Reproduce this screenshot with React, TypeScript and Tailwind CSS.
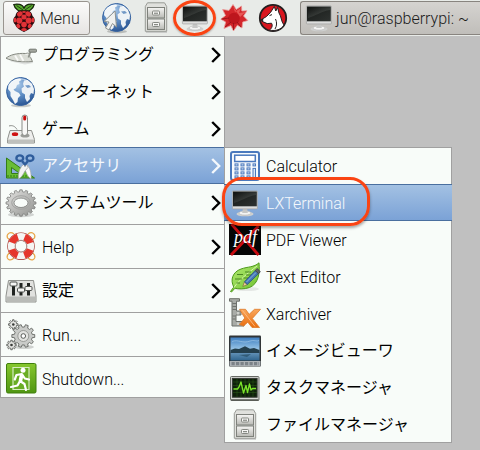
import React from 'react';

type IconProps = { children: React.ReactNode };

const Icon = ({ children }: IconProps) => (
  <svg viewBox="0 0 32 32" className="h-8 w-8 shrink-0" aria-hidden="true">
    {children}
  </svg>
);

// Outline of a cog wheel centred on cx, cy
const cogPath = (cx: number, cy: number, outer: number, inner: number, teeth: number, squash = 1) => {
  const points: string[] = [];
  for (let i = 0; i < teeth; i++) {
    [
      [-0.3, inner],
      [-0.2, outer],
      [0.2, outer],
      [0.3, inner],
    ].forEach(([offset, r]) => {
      const a = ((i + offset) / teeth) * Math.PI * 2;
      points.push(`${(cx + Math.cos(a) * r).toFixed(2)} ${(cy + Math.sin(a) * r * squash).toFixed(2)}`);
    });
  }
  return `M${points.join('L')}Z`;
};

const Gradients = () => (
  <svg className="absolute h-0 w-0" aria-hidden="true">
    <defs>
      <radialGradient id="ocean" cx="0.4" cy="0.25" r="0.8">
        <stop offset="0" stopColor="#a9c8e8" />
        <stop offset="0.5" stopColor="#5d8cc4" />
        <stop offset="1" stopColor="#24508f" />
      </radialGradient>
      <linearGradient id="metal" x1="0" y1="0" x2="0" y2="1">
        <stop offset="0" stopColor="#f6f6f4" />
        <stop offset="1" stopColor="#b9bab5" />
      </linearGradient>
      <linearGradient id="ring" x1="0" y1="0" x2="1" y2="1">
        <stop offset="0" stopColor="#e4e4e2" />
        <stop offset="1" stopColor="#8f908d" />
      </linearGradient>
      <linearGradient id="screen" x1="0" y1="0" x2="1" y2="1">
        <stop offset="0" stopColor="#171a18" />
        <stop offset="1" stopColor="#2e3230" />
      </linearGradient>
      <linearGradient id="glare" x1="0" y1="0" x2="1" y2="1">
        <stop offset="0" stopColor="#0d0f0e" />
        <stop offset="1" stopColor="#646a66" />
      </linearGradient>
      <linearGradient id="exit" x1="0" y1="0" x2="0" y2="1">
        <stop offset="0" stopColor="#86c72d" />
        <stop offset="1" stopColor="#4f9612" />
      </linearGradient>
      <linearGradient id="leaf" x1="0" y1="0" x2="1" y2="1">
        <stop offset="0" stopColor="#b6ec75" />
        <stop offset="1" stopColor="#6cc02c" />
      </linearGradient>
      <linearGradient id="orange" x1="0" y1="0" x2="0" y2="1">
        <stop offset="0" stopColor="#f9a85c" />
        <stop offset="1" stopColor="#e96c0c" />
      </linearGradient>
      <linearGradient id="sky" x1="0" y1="0" x2="0" y2="1">
        <stop offset="0" stopColor="#3f7fc0" />
        <stop offset="1" stopColor="#a9d2ee" />
      </linearGradient>
      <linearGradient id="lake" x1="0" y1="0" x2="0" y2="1">
        <stop offset="0" stopColor="#6d9cc2" />
        <stop offset="1" stopColor="#30648c" />
      </linearGradient>
    </defs>
  </svg>
);

const Globe = () => (
  <g>
    <ellipse cx="16" cy="29.5" rx="10" ry="1.8" fill="#000" opacity="0.2" />
    <circle cx="15.6" cy="15.5" r="14" fill="url(#ocean)" stroke="#34619f" />
    <path
      d="M3.5 9 6.5 5.5 11 3 15 2.5 16.5 4 14 5.5 14.5 8 12 9 11 12 8.5 13.5 10 15 14 17 15.5 19.5 13 22 12.5 26 10 28 8 24 5.5 20 5.5 16 3 13Z"
      fill="#f1f5f8"
    />
    <path
      d="M18 8 19 4.5 22.5 4 27 8 29 13 28.5 18 26 17 24.5 20 25 23 22 26 20 22 20 18.5 17 16.5 16.5 12.5 19 10.5Z"
      fill="#edf2f6"
    />
    <path d="M20 9.5 24 9 26 11 22.5 12Z" fill="#7299c6" />
    <path d="M4 9C9 1 22 1 27 9" fill="none" stroke="#fff" opacity="0.55" />
  </g>
);

const GlobeIcon = () => (
  <Icon>
    <Globe />
  </Icon>
);

const BrowserIcon = () => (
  <Icon>
    <Globe />
    <path d="M14 9 15.5 25 11.5 21.5 8 28 4.5 26 8 20 3 19.5Z" fill="#f0f1ef" stroke="#8d918e" />
  </Icon>
);

const CabinetIcon = () => (
  <Icon>
    <path d="M7.5 0.8H24.5L26.7 4.5V29.3H5.3V4.5Z" fill="#e0e1dd" stroke="#989a95" strokeLinejoin="round" />
    {[5.5, 17].map((y) => (
      <g key={y}>
        <rect x="7.5" y={y} width="17" height="10.5" fill="url(#metal)" stroke="#7f827c" />
        <rect x="12.5" y={y + 3.5} width="7" height="4" rx="0.8" fill="#f7f7f5" stroke="#858882" />
        <path d={`M14 ${y + 5.7}h4`} stroke="#6d706b" />
      </g>
    ))}
    <path d="M6 30.3H27" stroke="#888" opacity="0.4" />
  </Icon>
);

const MonitorIcon = () => (
  <Icon>
    <ellipse cx="16" cy="27" rx="8.5" ry="2.3" fill="#cfd0cf" />
    <ellipse cx="16" cy="26" rx="6" ry="2.1" fill="#f4f4f3" stroke="#b5b6b5" strokeWidth="0.6" />
    <path d="M14 21H18L18.8 26H13.2Z" fill="#c6c7c6" />
    <rect x="3.4" y="3.9" width="25" height="18" rx="0.7" fill="#dcdddc" stroke="#9d9f9d" strokeWidth="0.7" />
    <rect x="4" y="4.5" width="23.8" height="14.8" fill="url(#screen)" />
    <path d="M5 5.3H27V8C18 9 13 14 5 16Z" fill="url(#glare)" opacity="0.75" />
  </Icon>
);

const BurstIcon = () => (
  <Icon>
    <path
      d="M15 2.5 18.3 7.5 23.5 4 23.8 9 29 8.8 25.5 14 29.8 18.5 24.7 20 24 26 19.4 23.3 15.5 29 12.8 23.6 6 26.5 7.7 20 2.8 17.2 7.5 13.5 4.6 7.5 11 8.4Z"
      fill="#d3262b"
      stroke="#eb9a98"
      strokeWidth="0.8"
    />
    <path d="M15 4 17 10 23 6 21 11 27.5 10 22 15Z" fill="#ee6a66" opacity="0.75" />
    <circle cx="16" cy="16.5" r="5.8" fill="#bd161d" />
    <path d="M7 25 13 20M3.5 17 11 16M23 25 19 20M15.5 28 15.5 21" stroke="#8f0f16" strokeWidth="0.8" />
  </Icon>
);

const WolfIcon = () => (
  <Icon>
    <circle cx="16" cy="16" r="13.2" fill="#d9161f" stroke="#241f20" strokeWidth="1.8" />
    <path
      d="M17.3 4.5 18.8 9 20.6 5.5 22 11C24.5 14.5 24 19.5 27 23 24 27.6 19 29.2 12.5 28.2 15 26 16 23.5 14.5 21.2L10.2 21.6 5 19.3 4.5 17.5 9.5 14.5 13.7 10.2Z"
      fill="#fff"
      stroke="#241f20"
      strokeWidth="1"
      strokeLinejoin="round"
    />
    <path d="M12.5 13.6 15 12.6M18.5 17C20 20 20 24 18 27" fill="none" stroke="#241f20" />
    <circle cx="5.3" cy="17.9" r="1.1" fill="#241f20" />
  </Icon>
);

const RaspberryIcon = () => (
  <svg viewBox="0 0 24 30" className="h-[30px] w-6 shrink-0" aria-hidden="true">
    <path
      d="M12 8C8 9 3 7 1.8 1.5 5 .5 11 1 12 5.5 13 1 19 .5 22.2 1.5 21 7 16 9 12 8Z"
      fill="#58ab2d"
      stroke="#18250e"
      strokeWidth="1.2"
    />
    <path d="M4.5 2.5 11 7M19.5 2.5 13 7" stroke="#18250e" strokeWidth="0.8" />
    <path
      d="M12 7.5C16 6.5 20 8.5 20.5 13 23.5 15.5 23.3 19.5 20.8 21.5 19.5 25.5 16 27 12 29 8 27 4.5 25.5 3.2 21.5 .7 19.5 .5 15.5 3.5 13 4 8.5 8 6.5 12 7.5Z"
      fill="#2b0a0d"
    />
    <g fill="#e03237">
      <ellipse cx="7.8" cy="11" rx="2.9" ry="2.4" transform="rotate(-30 7.8 11)" />
      <ellipse cx="16.2" cy="11" rx="2.9" ry="2.4" transform="rotate(30 16.2 11)" />
      <ellipse cx="12" cy="9.1" rx="2" ry="1" />
      <circle cx="12" cy="14" r="2.6" />
      <circle cx="7.3" cy="17.6" r="3.1" />
      <circle cx="16.7" cy="17.6" r="3.1" />
      <ellipse cx="3" cy="17" rx="1.3" ry="2.6" />
      <ellipse cx="21" cy="17" rx="1.3" ry="2.6" />
      <circle cx="12" cy="21.6" r="2.8" />
      <ellipse cx="6.3" cy="23" rx="1.8" ry="2.4" transform="rotate(-30 6.3 23)" />
      <ellipse cx="17.7" cy="23" rx="1.8" ry="2.4" transform="rotate(30 17.7 23)" />
      <ellipse cx="12" cy="26.5" rx="2.8" ry="1.5" />
    </g>
  </svg>
);

const TrowelIcon = () => (
  <Icon>
    <path d="M6 21.5 20 24.5 28 23" fill="none" stroke="#777" strokeWidth="2" opacity="0.2" />
    <path d="M1 19.2C5 15.8 12 14 20.5 14.5L23.5 14 27.5 22.5C18 23.5 7 22.3 1 19.2Z" fill="#d9dcd5" stroke="#858981" />
    <path d="M10 16.5 13 21.5M15 15.8 18.5 22" stroke="#f8f9f7" strokeWidth="1.8" />
    <path d="M20.5 15.5 23.5 15 26 18.5" fill="none" stroke="#f2f3f0" />
    <path d="M23.5 18.5 25.5 12.5 27 11.5" fill="none" stroke="#8f938c" strokeWidth="1.8" />
    <rect x="24" y="10.2" width="7.5" height="3" rx="1" fill="#a3a79f" stroke="#72766f" />
  </Icon>
);

const JoystickIcon = () => (
  <Icon>
    <path d="M4 13C7 12 10 13 12 16.5" fill="none" stroke="#8a8c88" />
    <path d="M5 17.5H26.5L29.5 26.5V30H2.5V26.5Z" fill="#eeefed" stroke="#8e908c" strokeLinejoin="round" />
    <path d="M2.8 26.5H29.2V30H2.8Z" fill="#bfc1bd" />
    <ellipse cx="20" cy="22.5" rx="4.5" ry="2" fill="#9b9d99" />
    <rect x="17" y="2" width="5.5" height="20.5" rx="2.7" fill="#f8f8f7" stroke="#898b87" />
    <rect x="18.2" y="2.5" width="3" height="5" rx="1.5" fill="#c90d0d" />
    <ellipse cx="10" cy="21.2" rx="3.2" ry="1.9" fill="#cf1212" />
  </Icon>
);

const AccessoriesIcon = () => (
  <Icon>
    <path
      fillRule="evenodd"
      d="M1.5 8V28H29.5ZM6.5 17.5V23.5H15Z"
      fill="#69bd35"
      stroke="#347d16"
      strokeLinejoin="round"
    />
    <path d="M3 27V25M6 27V25M9 27V25M12 27V25M15 27V25M18 27V25M21 27V25" stroke="#2f7a12" />
    <path d="M17 17.5 19.5 12.5 23.5 16.5C25.5 20 26.5 24 26 29 23.5 27.5 22 24.5 20.5 21Z" fill="#fafafa" stroke="#a9adb0" strokeWidth="0.7" />
    <path d="M23 17.5 20.5 12.5 16.5 16.5C14 20 13 24 13.5 29 16.5 27.5 18 24.5 20 21Z" fill="#f2f3f3" stroke="#a1a5a8" strokeWidth="0.7" />
    <path d="M17 11 20 14.5 23 11" fill="none" stroke="#2f5d9c" strokeWidth="2.5" />
    <ellipse cx="14.8" cy="8.2" rx="3.4" ry="2.8" fill="none" stroke="#2f5d9c" strokeWidth="2.4" />
    <ellipse cx="25" cy="8.2" rx="3.4" ry="2.8" fill="none" stroke="#2f5d9c" strokeWidth="2.4" />
    <circle cx="20" cy="16" r="0.8" fill="#8d9195" />
  </Icon>
);

const SystemIcon = () => (
  <Icon>
    <ellipse cx="16" cy="27.8" rx="13" ry="2.4" fill="#777" opacity="0.3" />
    <path
      fillRule="evenodd"
      d={`${cogPath(16, 16, 15, 12.8, 16, 0.88)}M9 15.8a7 4.7 0 1 0 14 0a7 4.7 0 1 0-14 0Z`}
      fill="url(#ring)"
      stroke="#7d7f7c"
      strokeWidth="0.8"
    />
    <ellipse cx="16" cy="15.5" rx="9.3" ry="6.8" fill="none" stroke="#a2a3a1" />
  </Icon>
);

const HelpIcon = () => (
  <Icon>
    <g fill="none" stroke="#e8a64a" strokeWidth="1.2">
      <path d="M9 3C5 0 1 3 2.5 7L5 9M23 3C27 0 31 3 29.5 7L27 9M9 27C5 31 1 28 2.5 24L5 21M23 27C27 31 31 28 29.5 24L27 21" />
    </g>
    <circle cx="16" cy="15.2" r="9.6" fill="none" stroke="#9f2a22" strokeWidth="8.2" />
    <circle cx="16" cy="15.2" r="9.6" fill="none" stroke="#f5f5f3" strokeWidth="7" />
    <circle
      cx="16"
      cy="15.2"
      r="9.6"
      fill="none"
      stroke="#e5362c"
      strokeWidth="7"
      strokeDasharray="8.3 6.78"
      transform="rotate(20 16 15.2)"
    />
    <circle cx="16" cy="15.2" r="6" fill="none" stroke="#aaa8a6" strokeWidth="0.8" />
  </Icon>
);

const MixerIcon = () => (
  <Icon>
    <path d="M3.5 5.5H28.5L31 21V27H1V21Z" fill="#e1e2df" stroke="#8f918d" strokeLinejoin="round" />
    <path d="M1.5 21.5H30.5V26.5H1.5Z" fill="#b9bbb7" />
    <path d="M8.5 8V20.5M16 8V20.5M23.5 8V20.5" stroke="#202320" strokeWidth="3" />
    {[
      [5, 7],
      [12.5, 13],
      [20, 11.5],
    ].map(([x, y]) => (
      <rect key={x} x={x} y={y} width="7" height="4" rx="1" fill="#f5f5f3" stroke="#4d504c" />
    ))}
  </Icon>
);

const RunIcon = () => (
  <Icon>
    <ellipse cx="19" cy="28" rx="10" ry="2" fill="#555" opacity="0.25" />
    <path d={cogPath(18.3, 17, 11.5, 9, 10)} fill="#c9cbc8" stroke="#70736f" />
    <circle cx="18.3" cy="17" r="5.5" fill="#e2e3e0" stroke="#999b97" />
    <circle cx="18.3" cy="17" r="2.3" fill="#fff" stroke="#5b5e5a" />
    {[
      [8.3, 5.5],
      [6.5, 26],
    ].map(([x, y]) => (
      <g key={y}>
        <path d={cogPath(x, y, 4.8, 3.4, 8)} fill="#e3e4e1" stroke="#676a66" />
        <circle cx={x} cy={y} r="1.3" fill="#383b37" />
      </g>
    ))}
  </Icon>
);

const ShutdownIcon = () => (
  <Icon>
    <rect x="1.5" y="0.5" width="29.5" height="29.5" rx="1.5" fill="url(#exit)" stroke="#3f7f0c" />
    <path d="M8 4.5H24V26.5H8Z" fill="#69ad23" stroke="#d5ecc0" strokeWidth="1.2" />
    <circle cx="18" cy="7.2" r="2.5" fill="#fff" />
    <path
      d="M16.8 11 11.5 12 9.8 16.5M16.8 11 15 18 19.5 21 21 27M15 18 12.5 22.5 6 24M17.5 12 19.8 15.5 24 16.5"
      fill="none"
      stroke="#fff"
      strokeWidth="2.2"
      strokeLinecap="round"
      strokeLinejoin="round"
    />
    <path d="M16.6 12.5 15.5 17.5" stroke="#fff" strokeWidth="3.6" strokeLinecap="round" />
  </Icon>
);

const CalculatorIcon = () => (
  <Icon>
    <rect x="2" y="2" width="28" height="28" rx="2" fill="#f7fafc" stroke="#4a79bd" strokeWidth="2" />
    <rect x="5.7" y="5.2" width="20.6" height="6.3" fill="#fff" stroke="#4a79bd" strokeWidth="1.5" />
    {[14.5, 18.5, 22.5, 26.5].map((y) =>
      [6, 12, 18].map((x) => (
        <rect key={`${x}-${y}`} x={x} y={y - 0.6} width="3" height="2" fill="#dce7f4" stroke="#4a79bd" />
      ))
    )}
    <rect x="24" y="13.9" width="2.5" height="2" fill="#dce7f4" stroke="#4a79bd" />
    <rect x="24" y="18.4" width="2.5" height="9.6" fill="#dce7f4" stroke="#4a79bd" />
  </Icon>
);

const PdfIcon = () => (
  <Icon>
    <rect width="32" height="31" fill="#050505" />
    <path d="M2.5 0 29.5 31M29.5 2 2 31" stroke="#c80c10" strokeWidth="2.8" />
    <text
      x="5"
      y="19"
      fill="#fff"
      fontFamily="'Liberation Serif', serif"
      fontStyle="italic"
      fontSize="18"
    >
      pdf
    </text>
  </Icon>
);

const LeafIcon = () => (
  <Icon>
    <ellipse cx="18" cy="28" rx="12" ry="2" fill="#777" opacity="0.15" />
    <path
      d="M1.5 30.5 4.8 26C1 19 3.5 11 12 8 19 5.5 25 6.5 30 1.8 31 12 29.5 23 20.5 26.5 15 28.5 9 28 6 27.2L2.5 31Z"
      fill="url(#leaf)"
      stroke="#4d9a1b"
      strokeLinejoin="round"
    />
    <path d="M5 26.5C10 19 19 12 28 5" fill="none" stroke="#d7f6ad" />
    <path d="M8 13.5H14M16 11H22M6 18H13M14.5 17H19M17 14H24M7.5 22H11" stroke="#4b8624" />
    <path d="M13.8 25.5 15.5 20.8 18.2 23.6Z" fill="#f2d19b" stroke="#775e32" strokeWidth="0.6" />
    <path d="M15.5 20.8 26.2 9.5 29.5 12.7 18.2 23.6Z" fill="#4679b4" stroke="#294f7d" strokeWidth="0.8" />
    <path d="M26.2 9.5 28.2 7.5 31.3 10.8 29.5 12.7Z" fill="#60656a" stroke="#393d41" strokeWidth="0.8" />
    <path d="M17.5 21 27 11.5" stroke="#8bb3df" />
  </Icon>
);

const ArchiverIcon = () => (
  <Icon>
    <path
      d="M0.5 0.7H10.5V3.2H7.5V13H12V17H7V23.5H15V28H3V3.2H0.5Z"
      fill="#a9aca7"
      stroke="#6d706b"
      strokeLinejoin="round"
    />
    <path d="M3.5 5.5H7M3.5 8.5H7M3.5 11.5H7M3.5 18H6.5M3.5 21H6.5" stroke="#70736e" />
    <path d="M9 14V16.5M9 24.5V27" stroke="#d9dbd7" strokeWidth="1.5" />
    <path
      d="M10.5 11.3H16.5L20.2 16.3 25.5 11.3H31.5L23.3 20.5 30.5 29.5H23L18.8 24.2 14.5 28 10.5 26.5 15.8 20Z"
      fill="url(#orange)"
      stroke="#dd7a29"
      strokeWidth="0.8"
    />
    <path d="M13.5 12.5 26 28.5" stroke="#fcc38e" strokeWidth="0.8" />
  </Icon>
);

const ImageIcon = () => (
  <Icon>
    <rect y="0.5" width="32" height="31" rx="1" fill="#303537" />
    <rect x="1.5" y="2.5" width="29" height="14" fill="url(#sky)" />
    <path d="M3 6.5C9 4 14 9 21 6 25 4.5 28 7 30 5.5" fill="none" stroke="#b9d8ef" opacity="0.5" />
    <rect x="1.5" y="16" width="29" height="9.5" fill="url(#lake)" />
    <path d="M1.5 15 6 13.5 10 14 16 11.3 21 13.8 25 13 30.5 15V18H1.5Z" fill="#243f4d" />
    <path d="M10 20 22 19 18 22Z" fill="#1e4358" opacity="0.6" />
    <rect x="0.5" y="26" width="31" height="5.2" fill="#aeb3b6" />
    <path d="M2.5 28.6H30" stroke="#7b8287" strokeWidth="3.2" strokeDasharray="3.2 1.3" />
  </Icon>
);

const TaskIcon = () => (
  <Icon>
    <rect x="1.5" y="4.5" width="28.5" height="24" rx="1" fill="#d9dbd6" stroke="#686b66" />
    <rect x="3.4" y="6.4" width="24.7" height="18.8" fill="#0d2009" stroke="#343832" />
    <path
      d="M4 10H28M4 13.5H28M4 17H28M4 20.5H28M8 7V25M12 7V25M16 7V25M20 7V25M24 7V25"
      stroke="#2c5c18"
      strokeWidth="0.5"
    />
    <path
      d="M4.5 17H8.5L10 15 12 10 14.5 21 17 13.5 18.5 20.5 20.5 12 22 18 23.5 16.5H27"
      fill="none"
      stroke="#7be52a"
      strokeWidth="1.3"
      strokeLinejoin="round"
    />
    <path d="M2 28H29.5" stroke="#555852" strokeWidth="1.5" />
  </Icon>
);

const Arrow = () => (
  <svg viewBox="0 0 10 16" className="ml-auto h-4 w-2.5 shrink-0" aria-hidden="true">
    <path d="M1.2 1 8.2 8 1.2 15" fill="none" stroke="currentColor" strokeWidth="2.4" />
  </svg>
);

type Entry = {
  label: string;
  icon: React.FC;
  hasSubmenu?: boolean;
  active?: boolean;
  submenu?: Entry[];
};

const accessories: Entry[] = [
  { label: 'Calculator', icon: CalculatorIcon },
  { label: 'LXTerminal', icon: MonitorIcon, active: true },
  { label: 'PDF Viewer', icon: PdfIcon },
  { label: 'Text Editor', icon: LeafIcon },
  { label: 'Xarchiver', icon: ArchiverIcon },
  { label: 'イメージビューワ', icon: ImageIcon },
  { label: 'タスクマネージャ', icon: TaskIcon },
  { label: 'ファイルマネージャ', icon: CabinetIcon },
];

// Each inner list is separated from the next one by a line
const menuGroups: Entry[][] = [
  [
    { label: 'プログラミング', icon: TrowelIcon, hasSubmenu: true },
    { label: 'インターネット', icon: GlobeIcon, hasSubmenu: true },
    { label: 'ゲーム', icon: JoystickIcon, hasSubmenu: true },
    { label: 'アクセサリ', icon: AccessoriesIcon, hasSubmenu: true, active: true, submenu: accessories },
    { label: 'システムツール', icon: SystemIcon, hasSubmenu: true },
  ],
  [{ label: 'Help', icon: HelpIcon, hasSubmenu: true }],
  [{ label: '設定', icon: MixerIcon, hasSubmenu: true }],
  [{ label: 'Run...', icon: RunIcon }],
  [{ label: 'Shutdown...', icon: ShutdownIcon }],
];

const isLatin = (text: string) => /^[\x20-\x7e]+$/.test(text);

const MenuItem = ({ entry }: { entry: Entry }) => {
  const EntryIcon = entry.icon;
  return (
    <li className="relative">
      <button
        type="button"
        className={`flex h-[37px] w-full items-center gap-[5px] pr-1 pl-[5px] text-left whitespace-nowrap ${
          entry.active
            ? 'border-y border-[#4a6f9f] bg-linear-to-b from-[#a3c1e3] to-[#7ba2d6] text-[#f4f8fc]'
            : 'text-black'
        }`}
      >
        <EntryIcon />
        <span className={isLatin(entry.label) ? 'pt-0.5' : 'font-normal'}>{entry.label}</span>
        {entry.hasSubmenu && <Arrow />}
      </button>
      {entry.submenu && (
        <ul className="absolute top-0 left-full -ml-px w-[228px] bg-[#f8fcf9] inset-ring inset-ring-[#a0a0a0]">
          {entry.submenu.map((item) => (
            <MenuItem key={item.label} entry={item} />
          ))}
        </ul>
      )}
      {entry.label === 'LXTerminal' && (
        <span className="pointer-events-none absolute -top-[7px] -left-0.5 z-10 h-[49px] w-[148px] rounded-[20px] border-3 border-[#fa4413] shadow-[0_2px_3px_rgba(0,0,0,0.35)]" />
      )}
    </li>
  );
};

const launchers = [
  { name: 'Web Browser', icon: BrowserIcon },
  { name: 'File Manager', icon: CabinetIcon },
  { name: 'Terminal', icon: MonitorIcon, marked: true },
  { name: 'Mathematica', icon: BurstIcon },
  { name: 'Wolfram', icon: WolfIcon },
];

const Taskbar: React.FC = () => (
  <header className="flex h-9 items-center overflow-hidden bg-[#e8ebe8] pl-[3px]">
    <button
      type="button"
      className="flex h-[34px] w-[87px] shrink-0 items-center gap-1 rounded-[3px] border border-[#99958f] bg-linear-to-b from-[#fbfbfa] to-[#e6e4e2] pl-2 text-[#1c1c1c]"
    >
      <RaspberryIcon />
      <span className="pt-0.5">Menu</span>
    </button>
    <div className="ml-[7px] flex shrink-0">
      {launchers.map(({ name, icon: LauncherIcon, marked }) => (
        <button key={name} type="button" aria-label={name} className="relative flex h-9 w-[39px] items-center justify-center">
          <LauncherIcon />
          {marked && (
            <span className="pointer-events-none absolute top-0 -left-0.5 h-9 w-[43px] rounded-[50%] border-3 border-[#fa4413] shadow-[0_1px_2px_rgba(0,0,0,0.3)]" />
          )}
        </button>
      ))}
    </div>
    <button
      type="button"
      className="ml-2 flex h-[34px] flex-1 items-center gap-px rounded-l-[3px] border border-r-0 border-[#88847f] bg-linear-to-b from-[#d5d3d0] to-[#c0beba] pl-0.5 whitespace-nowrap text-[#1c1c1c]"
    >
      <MonitorIcon />
      <span className="pt-0.5">jun@raspberrypi: ~</span>
    </button>
  </header>
);

const App: React.FC = () => {
  return (
    <div className="min-h-screen bg-[#c0c0c0] font-[Roboto,'Noto_Sans_CJK_JP',sans-serif] text-base font-light">
      <Gradients />
      <Taskbar />
      <nav className="w-[225px] bg-[#f8fcf9] pb-px inset-ring inset-ring-[#a0a0a0]">
        {menuGroups.map((group, index) => (
          <ul key={index} className={index > 0 ? 'mt-[3px] border-t border-[#a0a0a0] pt-[3px]' : ''}>
            {group.map((entry) => (
              <MenuItem key={entry.label} entry={entry} />
            ))}
          </ul>
        ))}
      </nav>
    </div>
  );
};

export default App;
